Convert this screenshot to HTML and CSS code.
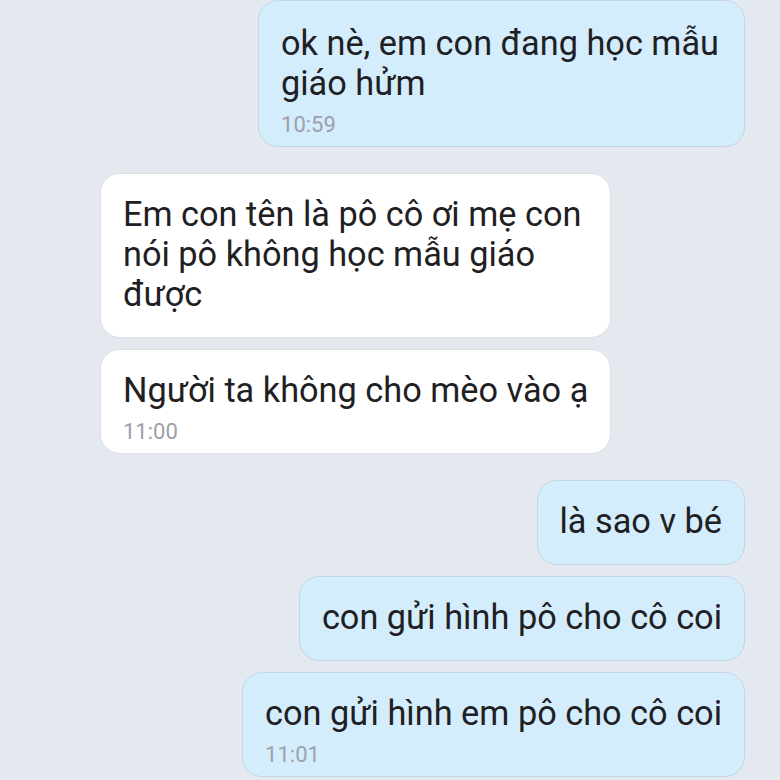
FILE: index.html
```html
<!DOCTYPE html>
<html lang="vi">
<head>
  <meta charset="UTF-8" />
  <meta name="viewport" content="width=device-width, initial-scale=1.0" />
  <title>Tin nhắn</title>
  <link rel="stylesheet" href="styles.css">
</head>
<body>
  <main class="chat">
    <div class="bubble sent has-time first">
      <p class="text">ok nè, em con đang học mẫu<br>giáo hửm</p>
      <span class="time">10:59</span>
    </div>

    <div class="group">
      <div class="bubble received">
        <p class="text">Em con tên là pô cô ơi mẹ con<br>nói pô không học mẫu giáo<br>được</p>
      </div>
      <div class="bubble received has-time">
        <p class="text">Người ta không cho mèo vào ạ</p>
        <span class="time">11:00</span>
      </div>
    </div>

    <div class="group">
      <div class="bubble sent">
        <p class="text">là sao v bé</p>
      </div>
      <div class="bubble sent">
        <p class="text">con gửi hình pô cho cô coi</p>
      </div>
      <div class="bubble sent has-time">
        <p class="text">con gửi hình em pô cho cô coi</p>
        <span class="time">11:01</span>
      </div>
    </div>
  </main>
</body>
</html>
```

FILE: styles.css
```css
body {
  margin: 0;
  background: #e4e8ef;
  font-family: Roboto, "Noto Sans", sans-serif;
  color: #1f2023;
}
.chat {
  display: flex;
  flex-direction: column;
  gap: 26px;
  padding: 0 35px 0 100px;
}
.group {
  display: flex;
  flex-direction: column;
  gap: 11px;
}
.bubble {
  width: fit-content;
  box-sizing: border-box;
  padding: 20px 22px 23px;
  border-radius: 20px;
}
.has-time {
  padding-bottom: 9px;
}
.sent {
  align-self: flex-end;
  background: #d4edfc;
  border: 1px solid #c3d6e4;
}
.received {
  align-self: flex-start;
  background: #ffffff;
  border: 1px solid #dde1e7;
  min-width: 511px;
}
.text {
  margin: 0;
  font-size: 34.3px;
  line-height: 40px;
  white-space: nowrap;
}
.time {
  display: block;
  margin-top: 10px;
  font-size: 22px;
  line-height: 24px;
  color: #9ba1a8;
}
.first {
  padding: 22px 25px 9px 22px;
}
```
